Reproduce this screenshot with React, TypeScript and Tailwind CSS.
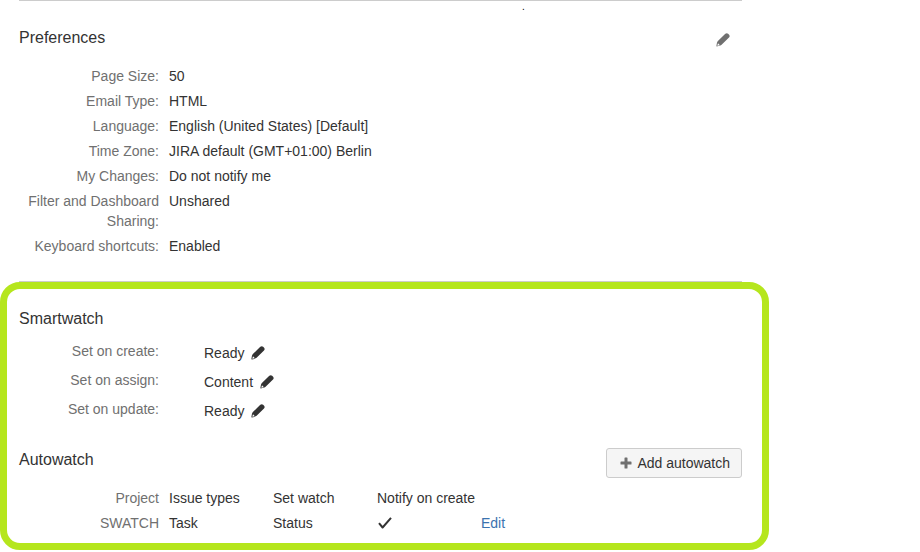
import { ReactNode } from 'react';

const preferences = [
  { label: 'Page Size:', value: '50' },
  { label: 'Email Type:', value: 'HTML' },
  { label: 'Language:', value: 'English (United States) [Default]' },
  { label: 'Time Zone:', value: 'JIRA default (GMT+01:00) Berlin' },
  { label: 'My Changes:', value: 'Do not notify me' },
  { label: 'Filter and Dashboard Sharing:', value: 'Unshared' },
  { label: 'Keyboard shortcuts:', value: 'Enabled' }
];

const smartwatch = [
  { label: 'Set on create:', value: 'Ready' },
  { label: 'Set on assign:', value: 'Content' },
  { label: 'Set on update:', value: 'Ready' }
];

const autowatch = [
  { project: 'SWATCH', issueTypes: 'Task', setWatch: 'Status', notify: true }
];

function PencilIcon() {
  return (
    <svg className="block w-3.5 h-3.5" viewBox="0 0 14 14" fill="currentColor" aria-hidden="true">
      <path d="M9.3.8c.9-.8 2-.8 2.8-.1l1 1c.8.9.7 2-.1 2.8l-7.4 7.3c-.8.7-2.3 1.1-4.8 1.6-.3 0-.5-.2-.4-.5.4-2.3.7-4 1.5-4.8zM1.9 10.4l-.6 2.3 2.4-.5c0-.4-.2-.7-.6-.7-.1-.6-.5-1-1.2-1.1z" fillRule="evenodd" />
    </svg>
  );
}

function PlusIcon() {
  return (
    <svg className="block w-3 h-3" viewBox="0 0 12 12" fill="#707070" aria-hidden="true">
      <path d="M4.5 1.1c0-.4.2-.6.6-.6h1.8c.4 0 .6.2.6.6v3.4h3.4c.4 0 .6.2.6.6v1.8c0 .4-.2.6-.6.6H7.5v3.4c0 .4-.2.6-.6.6H5.1c-.4 0-.6-.2-.6-.6V7.5H1.1c-.4 0-.6-.2-.6-.6V5.1c0-.4.2-.6.6-.6h3.4z" />
    </svg>
  );
}

function CheckIcon() {
  return (
    <svg className="block w-4 h-5" viewBox="0 0 16 20" fill="none" stroke="#333" role="img" aria-label="Yes">
      <path strokeWidth="2" strokeLinejoin="round" d="M2 10.2l3.6 4.3L14 4.8" />
    </svg>
  );
}

function Heading({ children }: { children: ReactNode }) {
  return <h2 className="text-base leading-[22px]">{children}</h2>;
}

export default function App() {
  return (
    <main className="mr-[151px] text-sm leading-5 text-[#333] font-['Liberation_Sans',Arial,sans-serif]">
      <section className="ml-[19px] mr-[27px] pb-[25px] border-t border-b border-[#ccc]">
        <p className="h-[26px] pl-[503px] text-[10px] leading-3 text-black">.</p>
        <div className="flex items-start justify-between">
          <Heading>Preferences</Heading>
          <button type="button" aria-label="Edit preferences" className="mt-1.5 mr-3 text-[#707070]">
            <PencilIcon />
          </button>
        </div>
        <dl className="mt-[17px] flex flex-col gap-[5px]">
          {preferences.map((item) => (
            <div key={item.label} className="flex gap-2.5">
              <dt className="w-[140px] shrink-0 text-right text-[#707070]">{item.label}</dt>
              <dd>{item.value}</dd>
            </div>
          ))}
        </dl>
      </section>

      <div className="rounded-[20px] border-[7px] border-[#b5e61d] pl-3 pr-5 pt-[19px] pb-2.5">
        <section>
          <Heading>Smartwatch</Heading>
          <dl className="mt-[11px] flex flex-col gap-[7px]">
            {smartwatch.map((item) => (
              <div key={item.label} className="flex items-start gap-[45px]">
                <dt className="w-[140px] shrink-0 text-right text-[#707070]">{item.label}</dt>
                <dd className="flex items-center gap-[7px] pt-0.5">
                  {item.value}
                  <button type="button" aria-label={`Edit ${item.label}`}>
                    <PencilIcon />
                  </button>
                </dd>
              </div>
            ))}
          </dl>
        </section>

        <section className="mt-[27px]">
          <div className="flex items-start justify-between">
            <div className="pt-px">
              <Heading>Autowatch</Heading>
            </div>
            <button
              type="button"
              className="flex items-center gap-[5px] h-[30px] pl-[13px] pr-[11px] rounded-[3px] border border-[#ccc] bg-[#f5f5f5]"
            >
              <PlusIcon />
              Add autowatch
            </button>
          </div>
          <table className="mt-2.5 table-fixed w-full text-left">
            <colgroup>
              <col className="w-[150px]" />
              <col className="w-[104px]" />
              <col className="w-[104px]" />
              <col className="w-[104px]" />
              <col />
            </colgroup>
            <thead>
              <tr>
                <th className="p-0 pr-2.5 pb-[5px] font-normal text-right text-[#707070]">Project</th>
                <th className="p-0 pb-[5px] font-normal">Issue types</th>
                <th className="p-0 pb-[5px] font-normal">Set watch</th>
                <th className="p-0 pb-[5px] font-normal whitespace-nowrap">Notify on create</th>
                <td />
              </tr>
            </thead>
            <tbody>
              {autowatch.map((row) => (
                <tr key={row.project}>
                  <td className="p-0 pr-2.5 text-right text-[#707070]">{row.project}</td>
                  <td className="p-0">{row.issueTypes}</td>
                  <td className="p-0">{row.setWatch}</td>
                  <td className="p-0">{row.notify && <CheckIcon />}</td>
                  <td className="p-0">
                    <a href="#edit" className="text-[#3b73af] hover:underline">Edit</a>
                  </td>
                </tr>
              ))}
            </tbody>
          </table>
        </section>
      </div>
    </main>
  );
}
